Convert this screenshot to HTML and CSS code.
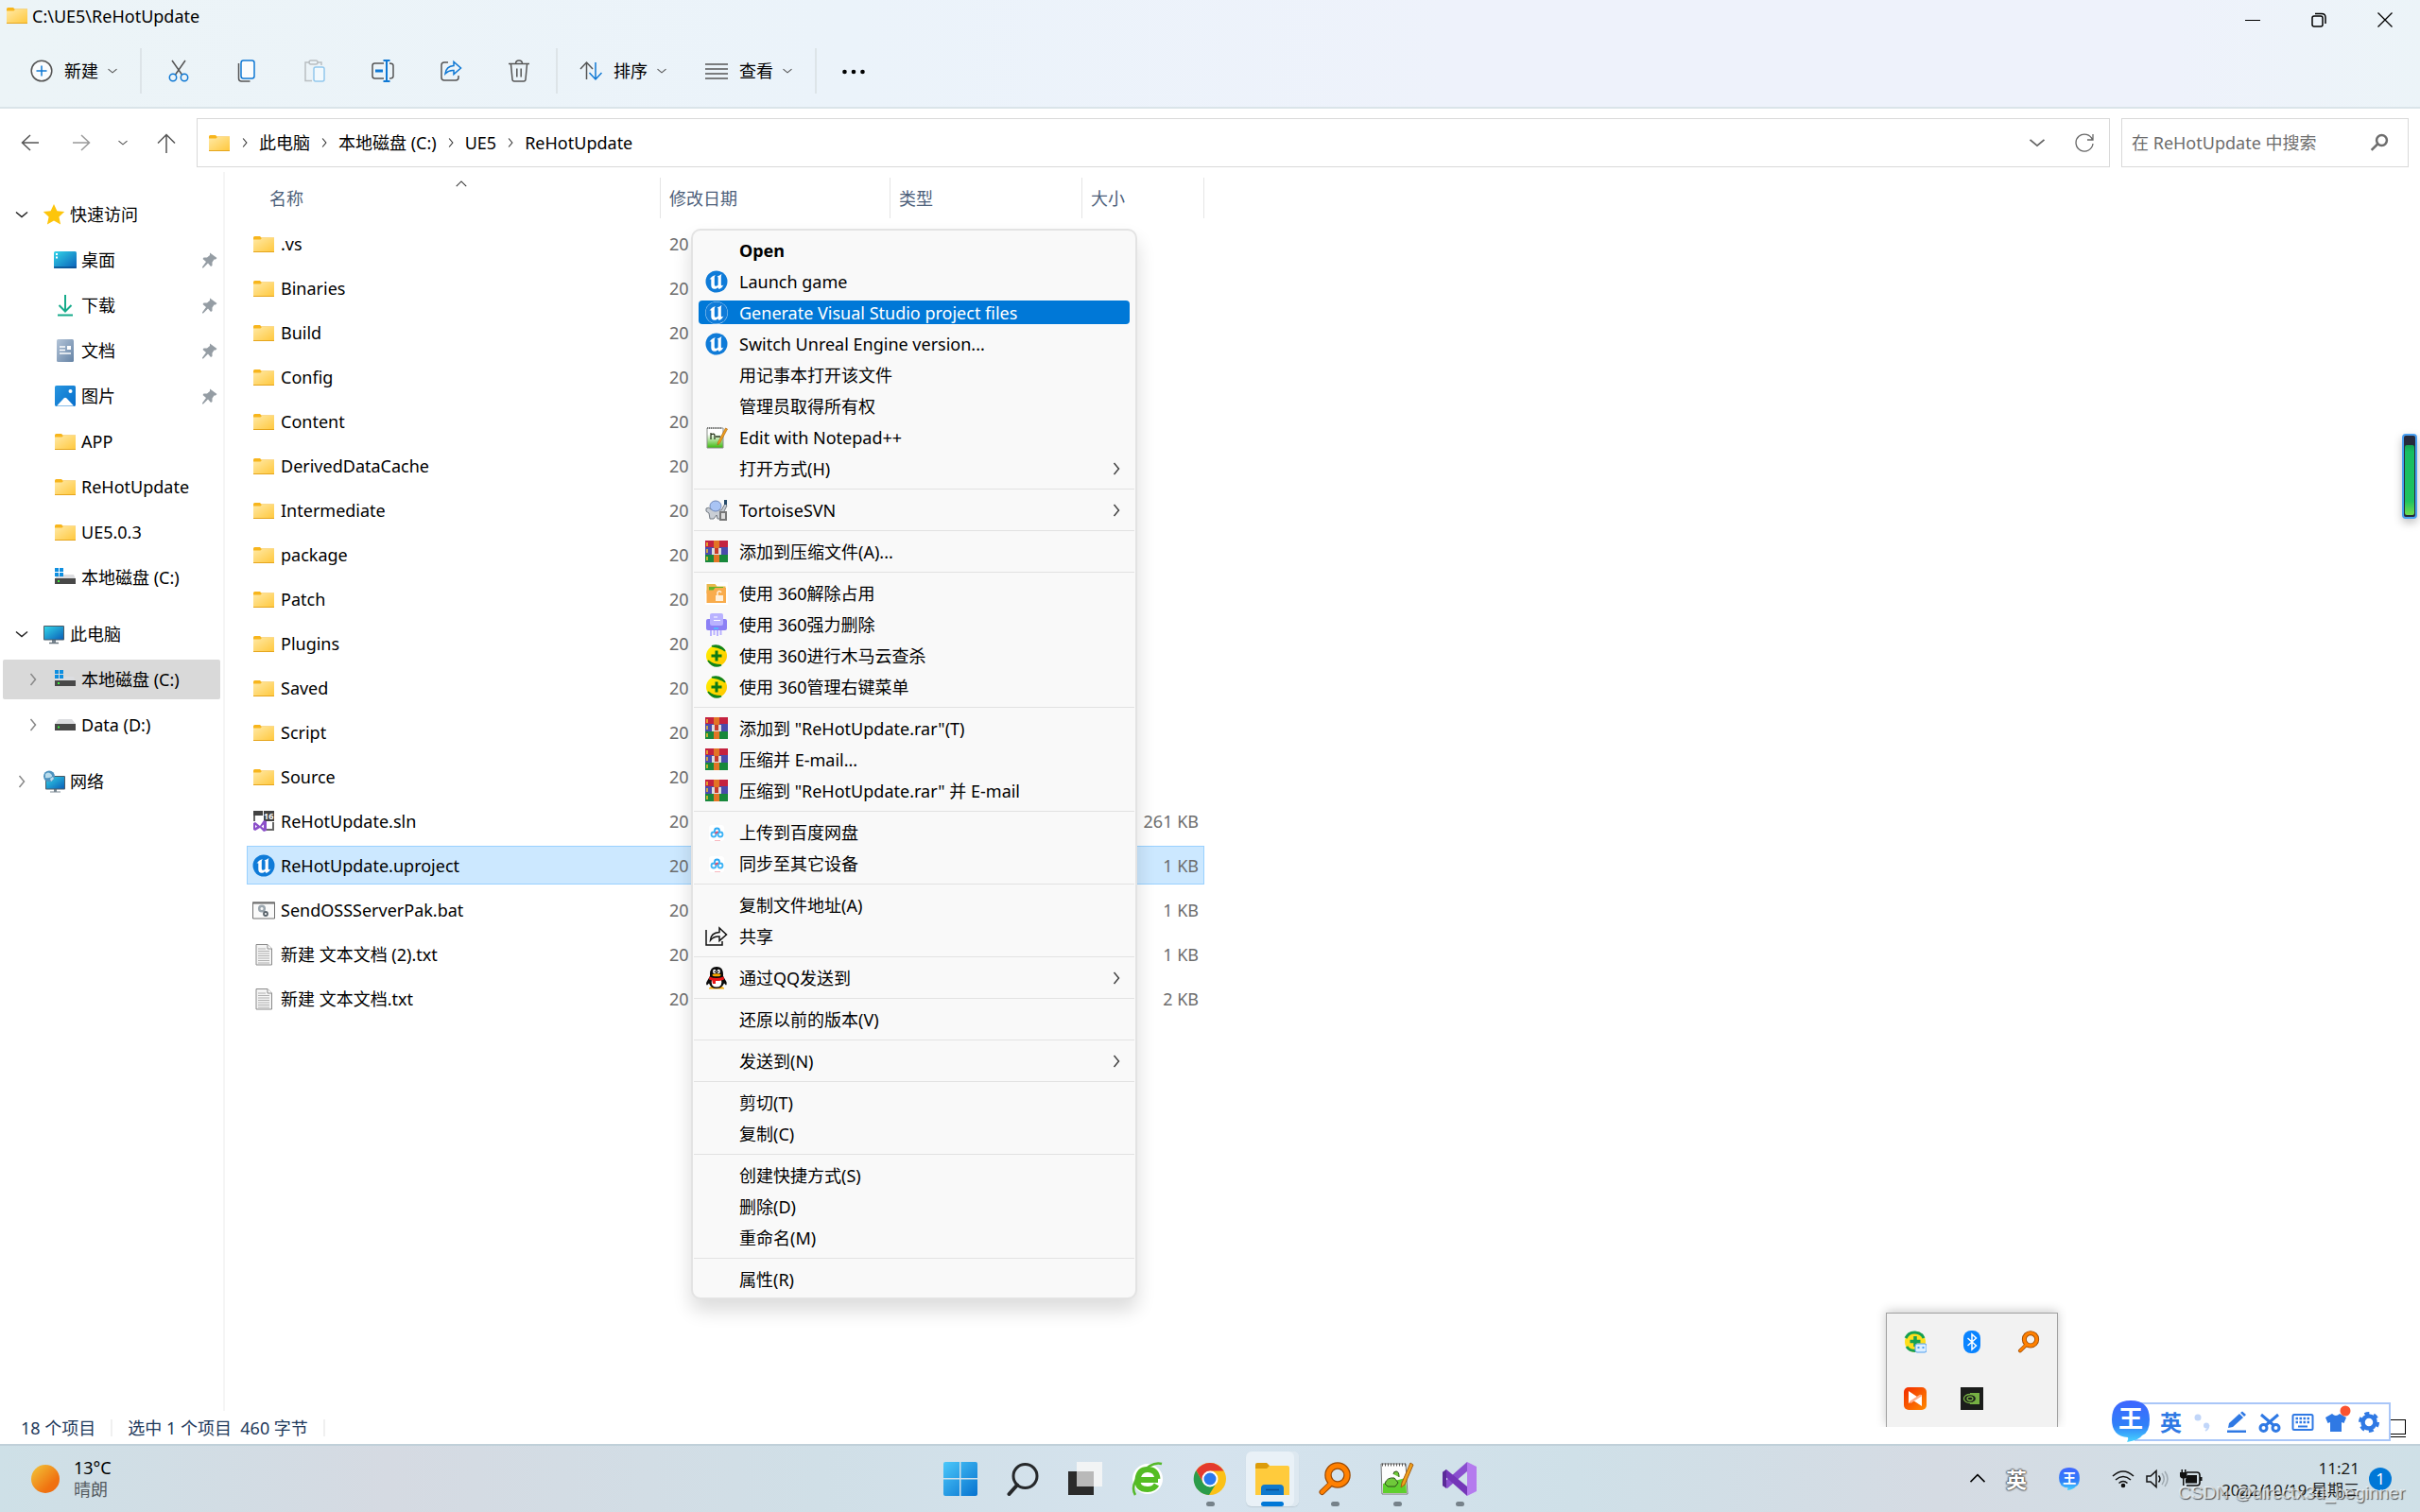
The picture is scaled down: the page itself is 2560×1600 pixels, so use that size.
FILE: index.html
```html
<!DOCTYPE html>
<html lang="zh-CN">
<head>
    <meta charset="UTF-8">
    <meta name="viewport" content="width=device-width, initial-scale=1.0">
    <title>C:\UE5\ReHotUpdate</title>
    <link rel="stylesheet" href="styles.css">
</head>
<body>
    <!-- icon sprite -->
    <svg class="sprite" aria-hidden="true">
        <defs>
            <linearGradient id="g-folder" x1="0" y1="0" x2="1" y2="1"><stop offset="0" stop-color="#ffe9a6"/><stop offset="1" stop-color="#ffc83d"/></linearGradient>
            <linearGradient id="g-screen" x1="0" y1="0" x2="1" y2="1"><stop offset="0" stop-color="#32d4e8"/><stop offset="1" stop-color="#0a5fb8"/></linearGradient>
            <linearGradient id="g-blue" x1="0" y1="0" x2="1" y2="1"><stop offset="0" stop-color="#4cc8fa"/><stop offset="1" stop-color="#0672cf"/></linearGradient>
            <linearGradient id="g-doc" x1="0" y1="0" x2="1" y2="1"><stop offset="0" stop-color="#b3c4d8"/><stop offset="1" stop-color="#6583a5"/></linearGradient>
            <linearGradient id="g-sun" x1="0" y1="0" x2="1" y2="1"><stop offset="0" stop-color="#f2c83a"/><stop offset="0.7" stop-color="#f07210"/><stop offset="1" stop-color="#ee6a10"/></linearGradient>
            <linearGradient id="g-wang" x1="0" y1="0" x2="0" y2="1"><stop offset="0" stop-color="#3f66ff"/><stop offset="0.6" stop-color="#2f80f8"/><stop offset="1" stop-color="#47d4ff"/></linearGradient>
            <linearGradient id="g-360" x1="0" y1="0" x2="1" y2="1"><stop offset="0" stop-color="#fff200"/><stop offset="1" stop-color="#ffc400"/></linearGradient>
            <linearGradient id="g-npp" x1="0" y1="0" x2="0" y2="1"><stop offset="0.3" stop-color="#ffffff"/><stop offset="1" stop-color="#3bb80c"/></linearGradient>
            <linearGradient id="g-red" x1="0" y1="0" x2="1" y2="1"><stop offset="0" stop-color="#f22b00"/><stop offset="1" stop-color="#ff8a00"/></linearGradient>
        </defs>
        <symbol id="folder" viewBox="0 0 24 24">
            <path d="M1 5.500q0-1.500 1.500-1.500h5.500l1.500 1.500h13.500v3h-22z" fill="#f7b51c"/>
            <path d="M1 7.500h7.500l1.500-1.500h13v14.500h-22z" fill="url(#g-folder)"/>
            <path d="M1 20.500h22" stroke="#e5a51d"/>
        </symbol>
        <symbol id="star" viewBox="0 0 24 24"><path d="M12 1l3.400 7.300 7.800.8-5.800 5.400 1.700 8-7.100-4-7.100 4 1.700-8L.8 9.100l7.800-.8z" fill="#fdc50c"/></symbol>
        <symbol id="desktop" viewBox="0 0 24 24"><rect y="3" width="24" height="18" rx="1.500" fill="url(#g-screen)"/><path d="M0 20h24" stroke="#0b4f8f" stroke-width="1.500"/><path d="M2 6h2M2 9.500h2" stroke="#fff" stroke-width="2"/></symbol>
        <symbol id="download" viewBox="0 0 24 24"><path d="M12 1v17M5.500 12l6.500 6.500 6.500-6.500M4 22.500h16" fill="none" stroke="#16ab8b" stroke-width="2"/></symbol>
        <symbol id="document" viewBox="0 0 24 24"><rect x="3" width="18" height="24" rx="1.500" fill="url(#g-doc)"/><path d="M6 8h6M6 11.500h6M6 15h12" stroke="#fff" stroke-width="1.500"/><path d="M14 7h4v4h-4z" fill="#fff"/></symbol>
        <symbol id="picture" viewBox="0 0 24 24"><rect x="1" y="1" width="22" height="22" rx="2" fill="url(#g-blue)"/><rect x="1" y="1" width="22" height="22" rx="2" fill="#0a6cc8" opacity=".55"/><path d="M3 22.500l7.500-8q1.500-1.500 3 0l7.500 8z" fill="#fff"/><circle cx="17.500" cy="7" r="2" fill="#fff"/></symbol>
        <symbol id="drive-c" viewBox="0 0 24 24"><path d="M3 9h18l2 5H1z" fill="#dcdde0"/><path d="M1 13h22v6H1z" fill="#484848"/><path d="M4 16h2" stroke="#3df03d" stroke-width="2"/><path d="M1 2h4v4H1zM6 2h4v4H6zM1 7h4v4H1zM6 7h4v4H6z" fill="#0f8fe0"/></symbol>
        <symbol id="drive" viewBox="0 0 24 24"><path d="M5 6h14l4 5H1z" fill="#dcdde0"/><path d="M1 11h22v7H1z" fill="#484848"/><path d="M4 14.500h2" stroke="#3df03d" stroke-width="2"/></symbol>
        <symbol id="pc" viewBox="0 0 24 24"><path d="M10 18h4v3h-4z" fill="#7a8791"/><path d="M7 21.500h10" stroke="#6b7780" stroke-width="1.500"/><rect x="1" y="3" width="22" height="15.500" rx="1" fill="#4c5a65"/><rect x="2" y="4" width="20" height="13.500" fill="url(#g-screen)"/></symbol>
        <symbol id="network" viewBox="0 0 24 24"><path d="M12 20h3v3h-3zM8 22.500h11v1H8z" fill="#7a8791"/><rect x="3" y="6" width="21" height="14.500" rx="1" fill="#4c5a65"/><rect x="4" y="7" width="19" height="12.500" fill="url(#g-screen)"/><circle cx="7" cy="6.500" r="6" fill="#4f93bf"/><path d="M3 4q3-3 6 0t-2 4-4-1zM8 9l3-2 1 2-3 3z" fill="#b9dcec"/></symbol>
        <symbol id="pin" viewBox="0 0 18 18"><path d="M10 1.500L17.500 7l-1.500 1.500-1.500 0-2 3 0 3.500-1.500 1-3-3.500-5 5-1 0 0-1 4-5.500L2.500 8l1-1.500 3.500 0 3-2.500z" fill="#959da4"/></symbol>
        <symbol id="down" viewBox="0 0 16 16"><path d="M2 5.500l6 5 6-5" fill="none" stroke="currentColor" stroke-width="1.500"/></symbol>
        <symbol id="right" viewBox="0 0 16 16"><path d="M5.500 2l5 6-5 6" fill="none" stroke="currentColor" stroke-width="1.500"/></symbol>
        <symbol id="up" viewBox="0 0 16 16"><path d="M2 10.500l6-6 6 6" fill="none" stroke="currentColor" stroke-width="1.200"/></symbol>
        <symbol id="ue" viewBox="0 0 24 24"><circle cx="12" cy="12" r="11.500" fill="#0f7bd8"/><path d="M4.500 10Q6.500 6 11 5.300 9.800 6.200 9.800 7.500v7.700q0 1.600 1.500 1.600 1.300 0 2.300-1.200V7.800q0-1-1-1.200Q15 5.800 17.500 4q-.7 1.500-.7 3v8q0 1.200.9 1.200t1.800-.9Q18 19 14.800 20l-1.600-1.800Q11.500 20 9.800 19.800 6.300 19.500 6.300 16V9.800Q6.300 8.600 4.500 10z" fill="#fff"/></symbol>
        <symbol id="npp" viewBox="0 0 24 24"><path d="M2 2h17v21H2z" fill="url(#g-npp)" stroke="#8a8f8a"/><path d="M2 2h16" stroke="#777" stroke-width="2" stroke-dasharray="1 1"/><path d="M6 7v7M6 9q4-2 4 1v4M11 11h5" fill="none" stroke="#2d3a20" stroke-width="1.300"/><path d="M21.500 2l2 1-8 15-2.500 2 .5-3z" fill="#f0a11c" stroke="#a55b10" stroke-width=".6"/></symbol>
        <symbol id="svn" viewBox="0 0 24 24"><path d="M1 10q3-2 5 1l11 1 4-7 2 2-4 8-2 6h-4l-1-4-3 4H5l-1-6-3-2z" fill="#c9ced5" stroke="#737a83"/><ellipse cx="11" cy="7.500" rx="6" ry="5.500" fill="#a9c4f5" stroke="#7088b8"/><path d="M20 1h3v5h-3z" fill="#274b6b"/><path d="M15 13h8v10h-8z" fill="#777"/><path d="M17 15h4v6h-4z" fill="#ddd"/></symbol>
        <symbol id="rar" viewBox="0 0 24 24"><path d="M0 0h24v7H0z" fill="#c4223f"/><path d="M0 7h24v8H0z" fill="#4a4bab"/><path d="M0 15h24v8H0z" fill="#18883b"/><path d="M2 2v4M2 9v4M2 17v4" stroke="#f3c02a" stroke-width="1.500"/><path d="M9 0h6v23H9z" fill="#e27525"/><path d="M7 8h10v7H7z" fill="#ddd"/><path d="M10 8h4v6h-4z" fill="#c63b2b"/></symbol>
        <symbol id="unlock" viewBox="0 0 24 24"><path d="M0 0h24v24H0z" fill="#fff"/><path d="M1.500 2h9l2 2.500h9V12h-20z" fill="#e9b94d"/><path d="M4 5h15v5H4z" fill="#67b52a"/><path d="M1.500 8.500h7l2-2.500h11.500v16H1.500z" fill="#f9ac4c"/><path d="M11 14h8v6h-8z" fill="#fff1dc"/><path d="M13 14v-3q2-3 4 0" fill="none" stroke="#fff1dc" stroke-width="1.500"/></symbol>
        <symbol id="shred" viewBox="0 0 24 24"><rect x="1" y="6" width="22" height="12" rx="2" fill="#8c80f5"/><rect x="5" width="14" height="13" rx="2" fill="#b9b2ff"/><path d="M9 4h4M9 7.500h7" stroke="#fff" stroke-width="1.200"/><path d="M9 16h5" stroke="#46c6ff" stroke-width="1.500"/><path d="M6 18v6M9.500 18v5M13 18v6M16.500 18v5" stroke="#b9b2ff" stroke-width="2"/></symbol>
        <symbol id="s360" viewBox="0 0 24 24"><circle cx="12" cy="12" r="11" fill="url(#g-360)"/><path d="M7 1.800q8-3 14 5-5-4-14-5zM3 17q6 5 14 4.800-8 4-14-4.800z" fill="#10841a" stroke="#10841a" stroke-width="1.500"/><path d="M12 6.500v11M6.500 12h11" stroke="#0d7a14" stroke-width="3"/></symbol>
        <symbol id="pan" viewBox="0 0 24 24"><rect x="4" y="4" width="16" height="17" rx="3" fill="#fff"/><circle cx="12.500" cy="10" r="2.500" fill="none" stroke="#2ca9f5" stroke-width="1.800"/><circle cx="9" cy="14" r="2.500" fill="none" stroke="#3bb2f5" stroke-width="1.800"/><circle cx="16" cy="14" r="2.500" fill="none" stroke="#3bb2f5" stroke-width="1.800"/><path d="M10.500 13l3-2" stroke="#f04d63" stroke-width="1.800"/><path d="M10 20.500h6" stroke="#f8b9c0"/></symbol>
        <symbol id="share" viewBox="0 0 24 24"><path d="M1 5v16h17v-4" fill="none" stroke="#111" stroke-width="1.500"/><path d="M5.500 16q.5-8 9.500-8.500V3l7.500 7-7.500 6.500V12q-6-.5-9.500 4z" fill="none" stroke="#111" stroke-width="1.500"/></symbol>
        <symbol id="qq" viewBox="0 0 24 24"><path d="M4 22.500q3-3 8-1 5-2 8 1v1H4z" fill="#f6a700"/><path d="M5 8q0-8 7-8t7 8v2l3.500 6q.5 3-.5 3.500l-2-2q-2 5.500-8 5.500t-8-5.500l-2 2q-1.500-.5-.5-3.500L5 10z" fill="#0a0a0a"/><path d="M7 14h10q1.500 7.500-5 7.500T7 14z" fill="#fff"/><ellipse cx="9.800" cy="5" rx="1.700" ry="2.300" fill="#fff"/><ellipse cx="14.200" cy="5" rx="1.700" ry="2.300" fill="#fff"/><circle cx="10.300" cy="5.300" r=".8"/><circle cx="13.700" cy="5.300" r=".8"/><ellipse cx="12" cy="8.800" rx="4.500" ry="1.500" fill="#f6a700"/><path d="M4.500 10.500q7.500 3 15 0l.5 3q-8 3-16 0zM7 13h4v5H8z" fill="#e81515"/></symbol>
        <symbol id="bat" viewBox="0 0 24 24"><path d="M.5 4h23v17H.5z" fill="#fafafa" stroke="#6f6f6f"/><path d="M0 4.500h24" stroke="#6f6f6f" stroke-width="2"/><circle cx="10" cy="10.500" r="2.800" fill="none" stroke="#9aa5ad" stroke-width="2.500"/><circle cx="14" cy="16" r="2" fill="none" stroke="#59636b" stroke-width="1.800"/></symbol>
        <symbol id="txt" viewBox="0 0 24 24"><path d="M4 1.500h12l4.500 4.500v17H4z" fill="#f4f4f4" stroke="#8a8a8a"/><path d="M16 1.500V6h4.500" fill="#fff" stroke="#8a8a8a"/><path d="M6 6h8M6 8.500h12M6 11h12M6 13.500h12M6 16h12M6 18.500h12M6 21h12" stroke="#b0b0b0"/></symbol>
        <symbol id="search" viewBox="0 0 24 24"><circle cx="15" cy="9" r="6.500" fill="none" stroke="currentColor" stroke-width="3"/><path d="M10 13.500L2 21.500" stroke="currentColor" stroke-width="3"/></symbol>
        <symbol id="everything" viewBox="0 0 36 36"><path d="M15 22L4.500 32" stroke="#9b4a04" stroke-width="6" stroke-linecap="round"/><circle cx="21" cy="14" r="10" fill="none" stroke="#9b4a04" stroke-width="7.500"/><circle cx="21" cy="14" r="10" fill="none" stroke="#ff8000" stroke-width="5"/><path d="M15 21.500L4.500 32" stroke="#ff8000" stroke-width="4" stroke-linecap="round"/></symbol>
    </svg>

    <header class="window-head">
        <div class="titlebar">
            <svg class="icon"><use href="#folder"/></svg>
            <span class="title">C:\UE5\ReHotUpdate</span>
            <div class="window-controls">
                <button aria-label="最小化"><svg class="icon-sm" viewBox="0 0 16 16"><path d="M0 8.500h16" stroke="#000"/></svg></button>
                <button aria-label="还原"><svg class="icon-sm" viewBox="0 0 16 16" fill="none" stroke="#000" stroke-width="1.500"><rect x="1" y="4" width="11" height="11" rx="2"/><path d="M4 1.500h7q4 0 4 4V12"/></svg></button>
                <button aria-label="关闭"><svg class="icon-sm" viewBox="0 0 16 16"><path d="M.5.500l15 15M15.500.500l-15 15" stroke="#000" stroke-width="1.300"/></svg></button>
            </div>
        </div>
        <div class="toolbar">
            <button class="tool">
                <svg class="icon" viewBox="0 0 24 24" fill="none"><circle cx="12" cy="12" r="10.800" fill="#fafcfd" stroke="#555" stroke-width="1.500"/><path d="M12 6.500v11M6.500 12h11" stroke="#0f78d4" stroke-width="1.500"/></svg>
                <span>新建</span>
                <svg class="chev"><use href="#down"/></svg>
            </button>
            <span class="divider"></span>
            <button class="tool-icon" aria-label="剪切"><svg class="icon" viewBox="0 0 24 24" fill="none" stroke-width="1.500"><path d="M5 1l10.500 15M19 1L8.500 16" stroke="#555"/><circle cx="6" cy="19" r="3.700" stroke="#0f78d4"/><circle cx="18" cy="19" r="3.700" stroke="#0f78d4"/></svg></button>
            <button class="tool-icon" aria-label="复制"><svg class="icon" viewBox="0 0 24 24" fill="none" stroke-width="1.500"><path d="M3.500 4v16q0 3 3 3h9" stroke="#555"/><rect x="6" y="1" width="14" height="19" rx="2.500" fill="#fafcfd" stroke="#0f78d4"/></svg></button>
            <button class="tool-icon" aria-label="粘贴" disabled><svg class="icon" viewBox="0 0 24 24" fill="none" stroke-width="1.500"><path d="M6 3H2v19.500h7M15 3h4v3" stroke="#b9bec1"/><rect x="6" y="1" width="9" height="4" rx="2" stroke="#b9bec1"/><rect x="11" y="8" width="11" height="15" rx="2" fill="#f2f9fd" stroke="#92c8ed"/></svg></button>
            <button class="tool-icon" aria-label="重命名"><svg class="icon" viewBox="0 0 24 24" fill="none" stroke-width="1.500"><path d="M13 4H3.500Q1 4 1 6.500v11Q1 20 3.500 20H13M19 4q4 0 4 2.500v11q0 2.500-4 2.500" stroke="#555"/><path d="M12.500 1h7M12.500 23h7M16 1v22" stroke="#0f78d4" stroke-width="2"/><path d="M4 12h8" stroke="#0f78d4" stroke-width="3"/></svg></button>
            <button class="tool-icon" aria-label="共享"><svg class="icon" viewBox="0 0 24 24" fill="none" stroke-width="1.500"><path d="M9 3H5Q2 3 2 6v13q0 3 3 3h12q3 0 3-3v-2" stroke="#555"/><path d="M6 15q1-8 9-8.500V2.500l7.500 6.500-7.500 6.500v-4Q10 11 6 15z" stroke="#0f78d4"/></svg></button>
            <button class="tool-icon" aria-label="删除"><svg class="icon" viewBox="0 0 24 24" fill="none" stroke="#555" stroke-width="1.500"><path d="M1 4.500h22M8.500 4.500Q8.500 1 12 1t3.500 3.500M3.500 5l1.500 16q.2 2 2 2h10q1.800 0 2-2L20.500 5M9.800 9.500v9M14.200 9.500v9"/></svg></button>
            <span class="divider"></span>
            <button class="tool">
                <svg class="icon" viewBox="0 0 24 24" fill="none" stroke-width="1.500"><path d="M7.500 21V4M1 10l6.500-7 6.500 7" stroke="#555"/><path d="M17 3v17M10.500 14l6.500 7 6.500-7" stroke="#0f78d4"/></svg>
                <span>排序</span>
                <svg class="chev"><use href="#down"/></svg>
            </button>
            <button class="tool">
                <svg class="icon" viewBox="0 0 24 24"><path d="M0 5h24M0 10h24M0 15h24M0 20h24" stroke="#555" stroke-width="1.500"/></svg>
                <span>查看</span>
                <svg class="chev"><use href="#down"/></svg>
            </button>
            <span class="divider"></span>
            <button class="tool-icon" aria-label="更多"><svg class="icon" viewBox="0 0 24 24"><circle cx="2.500" cy="13" r="2.300"/><circle cx="12" cy="13" r="2.300"/><circle cx="21.500" cy="13" r="2.300"/></svg></button>
        </div>
    </header>

    <nav class="address-row">
        <button aria-label="后退"><svg class="icon" viewBox="0 0 24 24"><path d="M21 12H4M12 4l-8.500 8L12 20" fill="none" stroke="#555" stroke-width="1.500"/></svg></button>
        <button aria-label="前进"><svg class="icon" viewBox="0 0 24 24"><path d="M3 12h17M12 4l8.500 8L12 20" fill="none" stroke="#999" stroke-width="1.500"/></svg></button>
        <button aria-label="最近"><svg class="chev"><use href="#down"/></svg></button>
        <button aria-label="上移"><svg class="icon" viewBox="0 0 24 24"><path d="M12 23V4M3 12.500L12 3.500l9 9" fill="none" stroke="#555" stroke-width="1.500"/></svg></button>
        <div class="address">
            <svg class="icon"><use href="#folder"/></svg>
            <svg class="crumb-sep"><use href="#right"/></svg>
            <a href="#">此电脑</a>
            <svg class="crumb-sep"><use href="#right"/></svg>
            <a href="#">本地磁盘 (C:)</a>
            <svg class="crumb-sep"><use href="#right"/></svg>
            <a href="#">UE5</a>
            <svg class="crumb-sep"><use href="#right"/></svg>
            <a href="#">ReHotUpdate</a>
            <div class="address-actions">
                <button aria-label="展开"><svg class="icon-md"><use href="#down"/></svg></button>
                <button aria-label="刷新"><svg class="icon-md" viewBox="0 0 20 20"><path d="M18.500 7A9 9 0 1 0 19 11M19 1v6h-6" fill="none" stroke="#666" stroke-width="1.300"/></svg></button>
            </div>
        </div>
        <form class="search">
            <input type="text" aria-label="搜索" placeholder="在 ReHotUpdate 中搜索">
            <button type="button" aria-label="搜索"><svg class="icon-md"><use href="#search"/></svg></button>
        </form>
    </nav>

    <main class="content">
        <aside class="sidebar">
            <ul class="tree">
                <li><a href="#"><svg class="twist open"><use href="#down"/></svg><svg class="icon"><use href="#star"/></svg>快速访问</a></li>
                <li class="child"><a href="#"><span class="twist"></span><svg class="icon"><use href="#desktop"/></svg>桌面<svg class="pin"><use href="#pin"/></svg></a></li>
                <li class="child"><a href="#"><span class="twist"></span><svg class="icon"><use href="#download"/></svg>下载<svg class="pin"><use href="#pin"/></svg></a></li>
                <li class="child"><a href="#"><span class="twist"></span><svg class="icon"><use href="#document"/></svg>文档<svg class="pin"><use href="#pin"/></svg></a></li>
                <li class="child"><a href="#"><span class="twist"></span><svg class="icon"><use href="#picture"/></svg>图片<svg class="pin"><use href="#pin"/></svg></a></li>
                <li class="child"><a href="#"><span class="twist"></span><svg class="icon"><use href="#folder"/></svg>APP</a></li>
                <li class="child"><a href="#"><span class="twist"></span><svg class="icon"><use href="#folder"/></svg>ReHotUpdate</a></li>
                <li class="child"><a href="#"><span class="twist"></span><svg class="icon"><use href="#folder"/></svg>UE5.0.3</a></li>
                <li class="child"><a href="#"><span class="twist"></span><svg class="icon"><use href="#drive-c"/></svg>本地磁盘 (C:)</a></li>
            </ul>
            <ul class="tree">
                <li><a href="#"><svg class="twist open"><use href="#down"/></svg><svg class="icon"><use href="#pc"/></svg>此电脑</a></li>
                <li class="child"><a href="#" class="current"><svg class="twist"><use href="#right"/></svg><svg class="icon"><use href="#drive-c"/></svg>本地磁盘 (C:)</a></li>
                <li class="child"><a href="#"><svg class="twist"><use href="#right"/></svg><svg class="icon"><use href="#drive"/></svg>Data (D:)</a></li>
            </ul>
            <ul class="tree">
                <li><a href="#"><svg class="twist"><use href="#right"/></svg><svg class="icon"><use href="#network"/></svg>网络</a></li>
            </ul>
        </aside>

        <section class="files">
            <table>
                <thead>
                    <tr>
                        <th class="col-name">名称<svg class="sort"><use href="#up"/></svg></th>
                        <th class="col-date">修改日期</th>
                        <th class="col-type">类型</th>
                        <th class="col-size">大小</th>
                    </tr>
                </thead>
                <tbody>
                    <tr><td><svg class="icon"><use href="#folder"/></svg>.vs</td><td>20</td><td></td><td></td></tr>
                    <tr><td><svg class="icon"><use href="#folder"/></svg>Binaries</td><td>20</td><td></td><td></td></tr>
                    <tr><td><svg class="icon"><use href="#folder"/></svg>Build</td><td>20</td><td></td><td></td></tr>
                    <tr><td><svg class="icon"><use href="#folder"/></svg>Config</td><td>20</td><td></td><td></td></tr>
                    <tr><td><svg class="icon"><use href="#folder"/></svg>Content</td><td>20</td><td></td><td></td></tr>
                    <tr><td><svg class="icon"><use href="#folder"/></svg>DerivedDataCache</td><td>20</td><td></td><td></td></tr>
                    <tr><td><svg class="icon"><use href="#folder"/></svg>Intermediate</td><td>20</td><td></td><td></td></tr>
                    <tr><td><svg class="icon"><use href="#folder"/></svg>package</td><td>20</td><td></td><td></td></tr>
                    <tr><td><svg class="icon"><use href="#folder"/></svg>Patch</td><td>20</td><td></td><td></td></tr>
                    <tr><td><svg class="icon"><use href="#folder"/></svg>Plugins</td><td>20</td><td></td><td></td></tr>
                    <tr><td><svg class="icon"><use href="#folder"/></svg>Saved</td><td>20</td><td></td><td></td></tr>
                    <tr><td><svg class="icon"><use href="#folder"/></svg>Script</td><td>20</td><td></td><td></td></tr>
                    <tr><td><svg class="icon"><use href="#folder"/></svg>Source</td><td>20</td><td></td><td></td></tr>
                    <tr><td><svg class="icon" viewBox="0 0 24 24"><path d="M2 12V2h8M14 21h8v-8" fill="none" stroke="#666" stroke-width="2"/><path d="M1 1h10v5H1zM12 1h11v11H12z" fill="#424242"/><text x="12" y="10" font-size="9" font-weight="700" fill="#fff">16</text><path d="M1 14l2-1 5 4 4-6 3 1v10l-3 1-4-4-5 3-2-1z" fill="#8b4fc9"/><path d="M3 16v3l2-1.500zM12 15.500v4L9.500 17.500z" fill="#fff"/></svg>ReHotUpdate.sln</td><td>20</td><td></td><td>261 KB</td></tr>
                    <tr class="selected"><td><svg class="icon"><use href="#ue"/></svg>ReHotUpdate.uproject</td><td>20</td><td></td><td>1 KB</td></tr>
                    <tr><td><svg class="icon"><use href="#bat"/></svg>SendOSSServerPak.bat</td><td>20</td><td></td><td>1 KB</td></tr>
                    <tr><td><svg class="icon"><use href="#txt"/></svg>新建 文本文档 (2).txt</td><td>20</td><td></td><td>1 KB</td></tr>
                    <tr><td><svg class="icon"><use href="#txt"/></svg>新建 文本文档.txt</td><td>20</td><td></td><td>2 KB</td></tr>
                </tbody>
            </table>
        </section>
    </main>

    <footer class="statusbar">
        <span>18 个项目</span>
        <span>选中 1 个项目&nbsp; 460 字节</span>
    </footer>

    <div class="context-menu">
        <button class="default"><span class="icon"></span>Open</button>
        <button><svg class="icon"><use href="#ue"/></svg>Launch game</button>
        <button class="active"><svg class="icon"><use href="#ue"/></svg>Generate Visual Studio project files</button>
        <button><svg class="icon"><use href="#ue"/></svg>Switch Unreal Engine version...</button>
        <button><span class="icon"></span>用记事本打开该文件</button>
        <button><span class="icon"></span>管理员取得所有权</button>
        <button><svg class="icon"><use href="#npp"/></svg>Edit with Notepad++</button>
        <button><span class="icon"></span>打开方式(H)<svg class="more"><use href="#right"/></svg></button>
        <hr>
        <button><svg class="icon"><use href="#svn"/></svg>TortoiseSVN<svg class="more"><use href="#right"/></svg></button>
        <hr>
        <button><svg class="icon"><use href="#rar"/></svg>添加到压缩文件(A)...</button>
        <hr>
        <button><svg class="icon"><use href="#unlock"/></svg>使用 360解除占用</button>
        <button><svg class="icon"><use href="#shred"/></svg>使用 360强力删除</button>
        <button><svg class="icon"><use href="#s360"/></svg>使用 360进行木马云查杀</button>
        <button><svg class="icon"><use href="#s360"/></svg>使用 360管理右键菜单</button>
        <hr>
        <button><svg class="icon"><use href="#rar"/></svg>添加到 "ReHotUpdate.rar"(T)</button>
        <button><svg class="icon"><use href="#rar"/></svg>压缩并 E-mail...</button>
        <button><svg class="icon"><use href="#rar"/></svg>压缩到 "ReHotUpdate.rar" 并 E-mail</button>
        <hr>
        <button><svg class="icon"><use href="#pan"/></svg>上传到百度网盘</button>
        <button><svg class="icon"><use href="#pan"/></svg>同步至其它设备</button>
        <hr>
        <button><span class="icon"></span>复制文件地址(A)</button>
        <button><svg class="icon"><use href="#share"/></svg>共享</button>
        <hr>
        <button><svg class="icon"><use href="#qq"/></svg>通过QQ发送到<svg class="more"><use href="#right"/></svg></button>
        <hr>
        <button><span class="icon"></span>还原以前的版本(V)</button>
        <hr>
        <button><span class="icon"></span>发送到(N)<svg class="more"><use href="#right"/></svg></button>
        <hr>
        <button><span class="icon"></span>剪切(T)</button>
        <button><span class="icon"></span>复制(C)</button>
        <hr>
        <button><span class="icon"></span>创建快捷方式(S)</button>
        <button><span class="icon"></span>删除(D)</button>
        <button><span class="icon"></span>重命名(M)</button>
        <hr>
        <button><span class="icon"></span>属性(R)</button>
    </div>

    <div class="battery-widget"><span></span></div>

    <div class="tray-popup">
        <svg class="icon" viewBox="0 0 24 24"><circle cx="12" cy="12" r="11" fill="#ffdf1c"/><path d="M2 8Q5 1.500 12 2q7 .5 9 6M3 17q3 4.500 9 4.500" fill="none" stroke="#14a052" stroke-width="3"/><path d="M12 6v11M6.500 11.500h11" stroke="#14a052" stroke-width="3.500"/><rect x="12" y="14" width="12" height="9" rx="2" fill="#dbeeff" stroke="#4e9ff0"/><path d="M15.500 17v2M20.500 17v2" stroke="#4e9ff0" stroke-width="2"/></svg>
        <svg class="icon" viewBox="0 0 24 24"><rect x="3" width="18" height="24" rx="8" fill="#0a84ff"/><path d="M7.500 8l9 8L12 20V4l4.500 4-9 8" fill="none" stroke="#fff" stroke-width="1.500"/></svg>
        <svg class="icon"><use href="#everything"/></svg>
        <svg class="icon" viewBox="0 0 24 24"><rect width="24" height="24" rx="5" fill="url(#g-red)"/><path d="M5 4l9 6-9 7zM19 8v12l-9-6z" fill="#fff"/><path d="M6.500 16L18 8.500" stroke="#ffad8a" stroke-width="2.500"/></svg>
        <svg class="icon" viewBox="0 0 24 24"><path d="M0 0h24v24H0z" fill="#1b1d1b"/><path d="M10 6h10v12H10z" fill="#76b043"/><ellipse cx="10" cy="12" rx="6.500" ry="4.500" fill="#1b1d1b" stroke="#76b043" stroke-width="1.300"/><ellipse cx="10" cy="12" rx="3" ry="2" fill="none" stroke="#76b043" stroke-width="1.300"/></svg>
    </div>

    <div class="corner-box"></div>
    <div class="ime">
        <svg class="ime-logo" viewBox="0 0 40 44"><path d="M20 0q20 0 20 20 0 14-8 17-3 5-16 7 2-3 1-5Q0 38 0 20 0 0 20 0z" fill="url(#g-wang)"/><text x="20" y="29" text-anchor="middle" font-size="26" font-weight="700" fill="#fff">王</text></svg>
        <b>英</b>
        <svg class="icon" viewBox="0 0 24 24"><circle cx="6" cy="7" r="3.500" fill="#c1d6f9"/><circle cx="15" cy="15.500" r="3" fill="#c1d6f9"/><path d="M17.500 15q0 4-3.500 6" fill="none" stroke="#c1d6f9" stroke-width="1.800"/></svg>
        <svg class="icon" viewBox="0 0 24 24" fill="#2f79e4"><path d="M3 18l1-5L15 3l4 4L8 17zM16 2l2-1.500 4 3.500-2 2zM2 20.500h20V23H2z"/></svg>
        <svg class="icon" viewBox="0 0 24 24" fill="none" stroke="#2f79e4" stroke-width="3"><path d="M3 4l14 12M21 4L7 16"/><circle cx="5.500" cy="18" r="3.500"/><circle cx="18.500" cy="18" r="3.500"/></svg>
        <svg class="icon" viewBox="0 0 24 24" fill="none" stroke="#2f79e4" stroke-width="2"><rect x="1.500" y="4" width="21" height="16" rx="1.500"/><path d="M4.500 8h15M4.500 12h15" stroke-width="2.500" stroke-dasharray="2.500 1.500"/><path d="M7 16.500h10"/></svg>
        <svg class="icon shirt" viewBox="0 0 24 24"><path d="M8 3q4 4 8 0l7 4-2.500 6-2.500-1v10H6V12l-2.500 1L1 7z" fill="#2f79e4"/><circle cx="22" cy="0" r="5.500" fill="#fb5330"/></svg>
        <svg class="icon" viewBox="0 0 24 24" fill="none" stroke="#2f79e4"><circle cx="12" cy="12" r="6.500" stroke-width="4.500"/><circle cx="12" cy="12" r="9.500" stroke-width="3" stroke-dasharray="5 4.950"/></svg>
    </div>

    <footer class="taskbar">
        <div class="weather">
            <svg class="sun" viewBox="0 0 30 30"><circle cx="15" cy="15" r="15" fill="url(#g-sun)"/></svg>
            <div><div>13°C</div><div class="weather-state">晴朗</div></div>
        </div>
        <div class="apps">
            <button class="app" aria-label="开始"><svg viewBox="0 0 36 36"><path d="M0 2q0-2 2-2h15v17H0zM18.500 0H34q2 0 2 2v15H18.500zM0 18.500h17V36H2q-2 0-2-2zM18.500 18.500H36V34q0 2-2 2H18.500z" fill="url(#g-blue)"/></svg></button>
            <button class="app" aria-label="搜索"><svg viewBox="0 0 36 36" fill="none" stroke="#26282a"><circle cx="20.500" cy="15" r="12.500" stroke-width="3"/><path d="M12 24.500L3.500 34" stroke-width="4" stroke-linecap="round"/></svg></button>
            <button class="app" aria-label="任务视图"><svg viewBox="0 0 36 36"><path d="M0 10h27v25H0z" fill="#2b2b2b"/><path d="M9 0h27v26H9z" fill="#f7f7f7" opacity=".85"/><path d="M9 10h18v16H9z" fill="#b9b9b9"/></svg></button>
            <button class="app" aria-label="浏览器"><svg viewBox="0 0 36 36" fill="none"><circle cx="18" cy="18" r="16" fill="#fff"/><path d="M29 19H8M28.500 18q-1-10-10.500-10T7.500 18.500 18 29q6.500 0 9.500-5" stroke="#54bd22" stroke-width="6"/><path d="M5 35Q-1 25 11 12T33 2" stroke="#55b92a" stroke-width="2.500"/></svg></button>
            <button class="app running" aria-label="Chrome"><svg viewBox="0 0 36 36"><circle cx="18" cy="18" r="17" fill="#fbc116"/><path d="M3.500 9A17 17 0 0 1 32.500 9.500H18L10.500 22z" fill="#e43a2e"/><path d="M3.300 9A17 17 0 0 0 17 35l8-13-7 3.500-7-3z" fill="#2a9c4b"/><circle cx="18" cy="18" r="8.500" fill="#fff"/><circle cx="18" cy="18" r="6.500" fill="#2a79ee"/></svg></button>
            <button class="app current" aria-label="文件资源管理器"><svg viewBox="0 0 36 36"><path d="M0 3q0-2 2-2h10l3 3v5H0z" fill="#dc9c0b"/><path d="M0 7h12l3-3h19q2 0 2 2v29H0z" fill="#ffcb3c"/><path d="M6 35V28q0-4 4-4h16q4 0 4 4v7z" fill="#1079cd"/><path d="M11 29.500h14" stroke="#0a4f94" stroke-width="1.500"/></svg></button>
            <button class="app running" aria-label="Everything"><svg><use href="#everything"/></svg></button>
            <button class="app running" aria-label="Notepad++"><svg viewBox="0 0 36 36"><path d="M1 2h26l2 32H2z" fill="#fdfdfd" stroke="#777"/><path d="M3 23l24-6 1 16H3z" fill="#5fcf2e"/><path d="M2 3h25" stroke="#555" stroke-width="3" stroke-dasharray="1 2"/><path d="M5 23q2-7 10-6l4 5-3 4H8zM14 13q0-3 3-3t3 6" fill="#6fc93a" stroke="#2b4d18"/><path d="M32 1l3 2-9 21-4 3 1-5z" fill="#f0a11c" stroke="#a55b10"/></svg></button>
            <button class="app running" aria-label="Visual Studio"><svg viewBox="0 0 36 36"><path d="M26 0l10 5v26l-10 5z" fill="#b57bee"/><path d="M26 0v10L5 28l-5-3v-2z" fill="#8a4fcf"/><path d="M0 11l4-3 22 18v10L0 13z" fill="#7436b8"/><path d="M0 11l4-3v20l-4-3z" fill="#5a2b98"/></svg></button>
        </div>
        <div class="tray">
            <svg class="icon-md"><use href="#up"/></svg>
            <b class="lang">英</b>
            <svg class="icon" viewBox="0 0 40 44"><path d="M20 0q20 0 20 20 0 14-8 17-3 5-16 7 2-3 1-5Q0 38 0 20 0 0 20 0z" fill="url(#g-wang)"/><text x="20" y="29" text-anchor="middle" font-size="26" font-weight="700" fill="#fff">王</text></svg>
            <div class="system">
                <svg class="icon" viewBox="0 0 24 24" fill="none" stroke="#111" stroke-width="1.600"><path d="M1 9Q12-1 23 9M4 13q8-7 16 0M7.500 16.500q4.500-4 9 0"/><circle cx="12" cy="19" r="1.500" fill="#111"/></svg>
                <svg class="icon" viewBox="0 0 24 24" fill="none" stroke="#111" stroke-width="1.500"><path d="M1 9h4l6-5.500v17L5 15H1zM13.500 8.500q3 3.500 0 7"/><path d="M17 6q4.500 6 0 12M20 4q6 8 0 16" stroke="#9fa9b0"/></svg>
                <svg class="icon" viewBox="0 0 24 24"><path d="M7 5h11q3 0 3 3v8q0 3-3 3H7" fill="none" stroke="#111" stroke-width="1.600"/><path d="M8 8h10v8.500H6v-4zM21 10h2.500v4H21zM0 5h7.500v3.500q0 3-3 3V19H3v-7.500q-3-.5-3-3zM1.500 2H3v3H1.500zM5 2h1.500v3H5z" fill="#111"/></svg>
            </div>
            <div class="clock"><div>11:21</div><div>2022/10/19 星期三</div></div>
            <span class="badge">1</span>
        </div>
    </footer>
    <div class="watermark">CSDN @directx3d_beginner</div>
</body>
</html>
```
FILE: styles.css
```css
* {
    box-sizing: border-box;
}
body {
    margin: 0;
    height: 100vh;
    display: flex;
    flex-direction: column;
    position: relative;
    overflow: hidden;
    background: #fff;
    color: #000;
    font: 18px/24px "Noto Sans", "Noto Sans CJK SC", sans-serif;
}
button {
    border: none;
    background: none;
    padding: 0;
    margin: 0;
    font: inherit;
    color: inherit;
}
a {
    color: inherit;
    text-decoration: none;
}
svg {
    display: block;
    flex: none;
}
.sprite {
    position: absolute;
    width: 0;
    height: 0;
}
.icon {
    width: 24px;
    height: 24px;
    flex: none;
}
.icon-md {
    width: 20px;
    height: 20px;
}
.icon-sm {
    width: 16px;
    height: 16px;
}
.chev {
    width: 12px;
    height: 12px;
    color: #555;
}

/* title bar and toolbar */
.window-head {
    background: linear-gradient(90deg, #ecf4f7, #ebf3fa 35%, #eef2fb 60%, #eef2fb 90%, #ecf4f8);
    border-bottom: 2px solid #dae4e9;
}
.titlebar {
    display: flex;
    height: 36px;
    padding: 0 2px 0 6px;
}
.titlebar > .icon {
    margin-top: 4px;
}
.title {
    margin: 5px 0 0 4px;
}
.window-controls {
    display: flex;
    margin-left: auto;
}
.window-controls button {
    width: 70px;
    height: 42px;
    display: grid;
    place-items: center;
}
.toolbar {
    display: flex;
    align-items: center;
    height: 77px;
    padding-left: 12px;
}
.tool {
    display: flex;
    align-items: center;
    height: 48px;
    padding: 0 20px;
}
.tool span {
    margin: 0 9px 0 12px;
}
.tool-icon {
    width: 72px;
    height: 48px;
    display: grid;
    place-items: center;
}
.divider {
    width: 2px;
    height: 48px;
    margin: 0 3px;
    background: #dde4e8;
}

/* address row */
.address-row {
    display: grid;
    grid-template-columns: 48px 60px 28px 64px 1fr 316px;
    padding: 10px 12px 5px 8px;
}
.address-row button {
    display: grid;
    place-items: center;
}
.address {
    display: flex;
    align-items: center;
    height: 52px;
    padding: 0 16px 0 11px;
    border: 1px solid #d9d9d9;
}
.crumb-sep {
    width: 12px;
    height: 12px;
    margin: 0 9px;
    color: #333;
}
.crumb-sep:first-of-type {
    margin-left: 8px;
}
.address-actions {
    display: flex;
    gap: 30px;
    margin-left: auto;
    color: #666;
}
.search {
    display: flex;
    align-items: center;
    height: 52px;
    margin-left: 12px;
    padding: 0 20px 0 10px;
    border: 1px solid #d9d9d9;
    color: #6d6d6d;
}
.search input {
    flex: 1;
    min-width: 0;
    padding: 0;
    border: none;
    outline: none;
    font: inherit;
}
.search input::placeholder {
    color: #6d6d6d;
    opacity: 1;
}

/* navigation tree */
.content {
    display: flex;
    flex: 1;
    min-height: 0;
}
.sidebar {
    width: 238px;
    flex: none;
    padding: 24px 3px 0;
    border-right: 2px solid #f5f5f5;
}
.tree {
    list-style: none;
    margin: 0 0 18px;
    padding: 0;
    display: grid;
    gap: 6px;
}
.tree a {
    display: flex;
    align-items: center;
    height: 42px;
    padding: 0 3px 0 12px;
    border-radius: 2px;
    white-space: pre;
}
.tree .child a {
    padding-left: 24px;
}
.tree .icon {
    margin-right: 5px;
}
.twist {
    width: 16px;
    height: 16px;
    margin-right: 14px;
    color: #888;
}
.twist.open {
    color: #222;
}
.pin {
    width: 18px;
    height: 18px;
    margin-left: auto;
}
.tree .current {
    background: #d9d9d9;
}

/* file list */
.files {
    flex: 1;
    padding-left: 23px;
}
.files table {
    width: 1013px;
    table-layout: fixed;
    border-spacing: 0 6px;
}
.files th {
    height: 43px;
    padding: 0 9px;
    border-right: 1px solid #e5e5e5;
    text-align: left;
    font-weight: 400;
    color: #4c607a;
}
.files .col-name {
    position: relative;
    width: 438px;
    padding-left: 24px;
}
.col-date {
    width: 243px;
}
.col-type {
    width: 203px;
}
.sort {
    position: absolute;
    top: 0;
    left: 50%;
    width: 16px;
    height: 14px;
    color: #333;
}
.files td {
    height: 41px;
    padding: 0 6px 0 9px;
    border: 1px solid transparent;
    border-width: 1px 0;
    color: #6d6d6d;
}
.files td:first-child {
    padding-left: 6px;
    color: #000;
}
.files td:last-child {
    text-align: right;
}
.files td .icon {
    display: inline-block;
    vertical-align: top;
    margin-right: 6px;
}
.files .selected td {
    background: #cce8ff;
    border-color: #99d1ff;
}
.files .selected td:first-child {
    box-shadow: inset 1px 0 #99d1ff;
}
.files .selected td:last-child {
    box-shadow: inset -1px 0 #99d1ff;
}

/* status bar */
.statusbar {
    display: flex;
    align-items: center;
    height: 35px;
    padding-left: 22px;
    color: #1e395b;
}
.statusbar span {
    height: 18px;
    margin-right: 16px;
    padding-right: 16px;
    border-right: 2px solid #f0f0f0;
    line-height: 18px;
}

/* context menu */
.context-menu {
    position: absolute;
    top: 242px;
    left: 731px;
    display: flex;
    flex-direction: column;
    width: 472px;
    padding: 4px 0 3px;
    border: 2px solid #e3e3e3;
    border-radius: 10px;
    background: #f9f9f9;
    box-shadow: 0 12px 20px rgba(0, 0, 0, 0.14);
}
.context-menu button {
    display: flex;
    align-items: center;
    height: 25px;
    margin: 4px 6px;
    padding: 0 6px 0 7px;
    border-radius: 4px;
    white-space: pre;
}
.context-menu button .icon {
    margin-right: 12px;
}
.context-menu .default {
    font-weight: 700;
}
.context-menu .active {
    background: #0078d7;
    color: #fff;
}
.context-menu .active .icon {
    border-radius: 50%;
    box-shadow: inset 0 0 0 1px #a8d0f2;
}
.more {
    width: 16px;
    height: 16px;
    margin-left: auto;
    color: #444;
}
.context-menu hr {
    width: auto;
    height: 1px;
    margin: 5px 1px;
    border: none;
    background: #e2e2e2;
}

/* floating widgets */
.battery-widget {
    position: absolute;
    top: 459px;
    right: 3px;
    width: 16px;
    height: 90px;
    padding: 10px 1px 2px;
    border: 2px solid #4a9ff0;
    border-radius: 4px;
    background: #262a3c;
    box-shadow: 0 4px 10px rgba(0, 0, 0, 0.25);
}
.battery-widget span {
    display: block;
    height: 100%;
    border-radius: 2px;
    background: linear-gradient(#12a552, #17bd62 10%, #1fc25f 80%, #6fdc4e);
}
.tray-popup {
    position: absolute;
    right: 383px;
    bottom: 90px;
    display: grid;
    grid-template-columns: repeat(3, 60px);
    grid-auto-rows: 60px;
    place-items: center;
    width: 182px;
    height: 121px;
    border: 1px solid #a0a0a0;
    border-bottom: none;
    background: #f2f2f2;
    box-shadow: 0 -2px 10px rgba(0, 0, 0, 0.2);
    clip-path: inset(-20px -20px 0 -20px);
}
.ime {
    position: absolute;
    right: 31px;
    bottom: 75px;
    display: flex;
    align-items: center;
    gap: 11px;
    height: 41px;
    padding: 0 9px 0 25px;
    border: 2px solid #a9c6f8;
    background: #fff;
    color: #2f79e4;
}
.ime b {
    font-size: 23px;
}
.ime .shirt {
    overflow: visible;
}
.ime-logo {
    position: absolute;
    top: -4px;
    left: -26px;
    width: 40px;
    height: 44px;
}
.corner-box {
    position: absolute;
    right: 15px;
    bottom: 82px;
    width: 18px;
    height: 16px;
    border: 1px solid #000;
    box-shadow: 0 2px #fff, 0 3px #000;
}

/* taskbar */
.taskbar {
    display: grid;
    grid-template-columns: 1fr auto 1fr;
    align-items: center;
    height: 72px;
    border-top: 2px solid #c0d0d9;
    background: linear-gradient(90deg, #cee0e7, #d5dae2 16%, #d0dfe7 34%, #d5e3ee 50%, #cfe0e8 65%, #d5dbe3 80%, #cfe0e7);
    line-height: 23px;
}
.weather {
    display: flex;
    align-items: center;
    padding-left: 33px;
}
.weather-state {
    color: #555c61;
}
.sun {
    width: 30px;
    height: 30px;
    margin-right: 15px;
}
.apps {
    display: flex;
    gap: 10px;
}
.app {
    position: relative;
    width: 56px;
    height: 58px;
    display: grid;
    place-items: center;
    border-radius: 6px;
}
.app svg {
    width: 36px;
    height: 36px;
}
.app.current {
    background: #e9f1f7;
    box-shadow: inset -5px 0 #dde8f0, 0 1px 1px #bccbd5;
}
.app.running::after,
.app.current::after {
    content: "";
    position: absolute;
    bottom: 0;
    left: 24px;
    width: 9px;
    height: 5px;
    border-radius: 3px;
    background: #76828a;
}
.app.current::after {
    left: 16px;
    width: 24px;
    background: #0078d7;
}
.tray {
    display: flex;
    align-items: center;
    justify-content: flex-end;
    padding-right: 30px;
}
.lang {
    margin: 0 33px 0 20px;
    font-size: 22px;
    color: #fff;
    text-shadow: 0 0 2px #333, 0 0 2px #333, 0 0 2px #333;
}
.system {
    display: flex;
    gap: 12px;
    margin: 0 20px 0 33px;
}
.clock {
    font-size: 17px;
    text-align: right;
    color: #1c1e20;
}
.badge {
    width: 24px;
    height: 24px;
    margin-left: 10px;
    border-radius: 50%;
    background: #0078d7;
    color: #fff;
    font-size: 17px;
    line-height: 24px;
    text-align: center;
}
.watermark {
    position: absolute;
    right: 16px;
    bottom: 8px;
    font: 19px/24px "Liberation Sans", sans-serif;
    color: rgba(255, 255, 255, 0.65);
    text-shadow: 1px 1px 1px rgba(0, 0, 0, 0.65);
}
```
